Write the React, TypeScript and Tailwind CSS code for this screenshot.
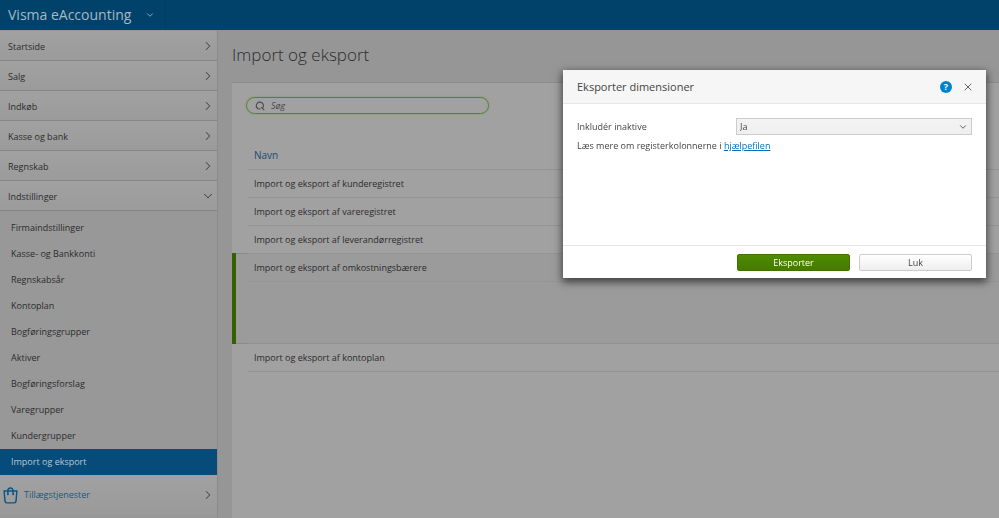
import { ChevronDown, ChevronRight, X } from "lucide-react";

const mainItems = ["Startside", "Salg", "Indkøb", "Kasse og bank", "Regnskab"];

const settingsItems = [
  "Firmaindstillinger",
  "Kasse- og Bankkonti",
  "Regnskabsår",
  "Kontoplan",
  "Bogføringsgrupper",
  "Aktiver",
  "Bogføringsforslag",
  "Varegrupper",
  "Kundergrupper",
  "Import og eksport",
];

const registers = [
  "Import og eksport af kunderegistret",
  "Import og eksport af vareregistret",
  "Import og eksport af leverandørregistret",
];

function BagIcon() {
  return (
    <svg viewBox="0 0 16 18" className="h-[17px] w-[15px] text-[#0b5484]" fill="none" stroke="currentColor" strokeWidth="1.5" aria-hidden="true">
      <path d="M1.200 4.200h13.600l-.9 10.800c-.1 1.300-.8 1.900-2 1.900H4.100c-1.200 0-1.900-.6-2-1.900z" />
      <path d="M5.200 7.500V4c0-4 5.600-4 5.600 0v3.500" />
      <circle cx="5.200" cy="7.700" r="1" fill="currentColor" stroke="none" />
      <circle cx="10.800" cy="7.700" r="1" fill="currentColor" stroke="none" />
    </svg>
  );
}

function SearchIcon() {
  return (
    <svg viewBox="0 0 10 10" className="size-[10px] text-[#4c4c4c]" fill="none" stroke="currentColor" strokeWidth="1.1" aria-hidden="true">
      <path d="M3.200 7.900A3.600 3.600 0 1 1 7.400 7.300" />
      <path d="M3.200 7.900H5.500" />
      <path d="M6.200 6.100L9.200 9.100" />
      <path d="M.8 6.400L2.400 6.400" />
    </svg>
  );
}

function MenuRow({ label, open = false }: { label: string; open?: boolean }) {
  const Icon = open ? ChevronDown : ChevronRight;
  return (
    <a
      href="#"
      aria-expanded={open}
      className="flex h-[30px] items-center justify-between border-b border-[#868686] bg-linear-to-b from-[#a1a1a1] to-[#9b9b9b] pr-0.5 pl-2"
    >
      <span className="pt-0.5">{label}</span>
      <Icon className="size-3.5 text-[#4a4a4a]" strokeWidth={1.75} />
    </a>
  );
}

function Sidebar() {
  return (
    <nav className="w-[218px] shrink-0 border-r border-[#8b8b8b] bg-[#989898] pt-px">
      {mainItems.map((label) => (
        <MenuRow key={label} label={label} />
      ))}
      <MenuRow label="Indstillinger" open />
      <ul className="pt-1">
        {settingsItems.map((label) => (
          <li key={label}>
            <a
              href="#"
              className={
                label === "Import og eksport"
                  ? "flex h-[26px] items-center bg-[#064b79] px-[11px] text-[#b9c7d2]"
                  : "flex h-[26px] items-center px-[11px]"
              }
            >
              {label}
            </a>
          </li>
        ))}
      </ul>
      <a href="#" className="flex h-10 items-center gap-1.5 bg-linear-to-b from-[#a1a1a1] to-[#9a9a9a] pr-0.5 pl-[3px] text-[#24567d]">
        <BagIcon />
        <span className="flex-1">Tillægstjenester</span>
        <ChevronRight className="size-3.5 text-[#4a4a4a]" strokeWidth={1.75} />
      </a>
    </nav>
  );
}

function Registers() {
  return (
    <table className="mt-[27px] w-full text-left">
      <thead>
        <tr className="h-7">
          <th scope="col" className="w-3.5" aria-hidden="true" />
          <th scope="col" className="border-b border-[#939393] pl-1.5 text-[10px] font-normal text-[#1d4a6b]">
            Navn
          </th>
        </tr>
      </thead>
      <tbody>
        {registers.map((name) => (
          <tr key={name} className="h-7">
            <td />
            <td className="border-b border-[#959595] pt-0.5 pl-1.5">{name}</td>
          </tr>
        ))}
        <tr className="h-7 bg-[#9b9b9b]">
          <td rowSpan={2} className="border-y border-l-4 border-y-[#8b8b8b] border-l-[#356000]" />
          <td className="border-t border-b border-t-[#8b8b8b] border-b-[#959595] pt-0.5 pl-1.5">Import og eksport af omkostningsbærere</td>
        </tr>
        <tr className="h-[62px] bg-[#9b9b9b]">
          <td className="border-b border-[#929292]" />
        </tr>
        <tr className="h-7">
          <td />
          <td className="border-b border-[#959595] pt-0.5 pl-1.5">Import og eksport af kontoplan</td>
        </tr>
      </tbody>
    </table>
  );
}

function ExportDialog() {
  return (
    <section
      role="dialog"
      aria-labelledby="dialog-title"
      className="fixed top-[70px] right-[13px] w-[423px] bg-white text-[#444] shadow-[0_3px_8px_1px_rgba(0,0,0,0.6)]"
    >
      <header className="flex h-[34px] items-center border-b border-[#e6e6e6] bg-[#f6f6f6] pr-3 pl-3.5">
        <h2 id="dialog-title" className="flex-1 text-[11px]">
          Eksporter dimensioner
        </h2>
        <button type="button" aria-label="Hjælp" className="mr-2.5 flex size-3 items-center justify-center rounded-full bg-[#0083ce] text-[9px] leading-none font-bold text-white">
          ?
        </button>
        <button type="button" aria-label="Luk dialog" className="text-[#666]">
          <X className="size-3" strokeWidth={2} />
        </button>
      </header>
      <div className="h-[141px] px-3.5 pt-3.5">
        <div className="flex items-center">
          <label htmlFor="inactive" className="w-[159px]">
            Inkludér inaktive
          </label>
          <div className="relative flex-1">
            <select
              id="inactive"
              className="block h-[17px] w-full appearance-none border border-[#ccc] bg-linear-to-b from-[#f3f3f3] to-[#efefef] pl-[3px] leading-none"
            >
              <option>Ja</option>
              <option>Nej</option>
            </select>
            <ChevronDown className="pointer-events-none absolute top-1 right-1 size-2.5 text-[#555]" strokeWidth={2.25} />
          </div>
        </div>
        <p className="mt-1">
          Læs mere om registerkolonnerne i{" "}
          <a href="#" className="text-[#0071b9] underline">
            hjælpefilen
          </a>
        </p>
      </div>
      <footer className="flex h-[33px] items-center justify-end gap-[9px] border-t border-[#e6e6e6] pr-3.5">
        <button type="button" className="h-[17px] w-[113px] rounded-xs border border-[#3f7200] bg-linear-to-b from-[#508c00] to-[#447a00] leading-none text-white">
          Eksporter
        </button>
        <button type="button" className="h-[17px] w-[113px] rounded-xs border border-[#ccc] bg-linear-to-b from-white to-[#eeeeee] leading-none">
          Luk
        </button>
      </footer>
    </section>
  );
}

export default function App() {
  return (
    <div className="flex h-screen flex-col overflow-hidden bg-[#969696] font-['Open_Sans','Noto_Sans',sans-serif] text-[9px] leading-[14px] text-[#2c2c2c]">
      <header className="flex h-[30px] shrink-0 items-center bg-[#00426a]">
        <button type="button" className="flex h-full items-center gap-3.5 border-r border-[#073b5c] pr-2.5 pl-2 text-sm text-[#a7b8c4]">
          Visma eAccounting
          <ChevronDown className="size-2.5" strokeWidth={2} />
        </button>
      </header>
      <div className="flex min-h-0 flex-1">
        <Sidebar />
        <main className="flex min-w-0 flex-1 flex-col pl-3.5">
          <h1 className="pt-[13px] pb-[15px] text-[17px] leading-6 font-light">Import og eksport</h1>
          <div className="flex-1 border-t border-[#8e8e8e] bg-[#a1a1a1] pt-3.5">
            <label className="ml-3.5 flex h-[17px] w-[243px] items-center gap-1.5 rounded-full border border-[#5c7b37] px-2 shadow-[0_0_2px_#7c9c55]">
              <SearchIcon />
              <input type="search" aria-label="Søg" placeholder="Søg" className="min-w-0 flex-1 bg-transparent italic outline-none placeholder:text-[#4b4b4b]" />
            </label>
            <Registers />
          </div>
        </main>
      </div>
      <ExportDialog />
    </div>
  );
}
